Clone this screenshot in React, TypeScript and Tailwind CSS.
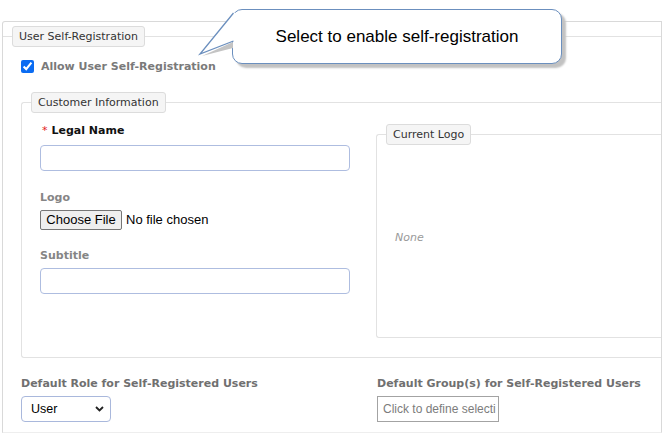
import React from "react";

function Legend({ children }: { children: React.ReactNode }) {
  return (
    <div className="-mt-[11px] ml-[9px] flex w-fit h-[21px] items-center px-[6px] border border-[#dcdcdc] bg-[#f5f5f5] rounded-[3px] text-[#333] whitespace-nowrap">
      {children}
    </div>
  );
}

export default function App() {
  return (
    <div className="relative w-[662px] h-[441px] overflow-hidden bg-white text-[11px] leading-[14px] font-['DejaVu_Sans',Verdana,sans-serif]">
      <div className="ml-[2px] mt-[21px] w-[660px] h-[412px] border border-[#d9d9d9] border-b-[#eeeeee] rounded-tl-[3px] overflow-hidden">
        <div className="mt-[14px] border-t border-[#e2e2e2]">
          <Legend>User Self-Registration</Legend>

          <div className="flex items-center mt-[12px] ml-[18px] h-[14px]">
            <input type="checkbox" defaultChecked className="w-[13px] h-[13px] accent-[#0b6cf2]" />
            <span className="ml-[7px] pt-[2px] font-bold text-[#7a7a7a]">Allow User Self-Registration</span>
          </div>

          <div className="mt-[29px] ml-[18px] border-l border-t border-b border-[#e2e2e2] rounded-l-[3px]">
            <Legend>Customer Information</Legend>
            <div className="flex items-start">
              <div className="ml-[18px] w-[310px] pt-[11px] flex flex-col">
                <div className="h-[14px] flex items-center whitespace-nowrap">
                  <span className="text-[#e32020] ml-[2px] mr-[4px]">*</span>
                  <span className="font-bold text-[#111]">Legal Name</span>
                </div>
                <div className="mt-[7px] h-[26px] w-[310px] border border-[#aebde0] rounded-[4px] bg-white" />
                <div className="mt-[20px] h-[14px] font-bold text-[#858585]">Logo</div>
                <div className="mt-[5px] h-[20px] flex items-center font-['Liberation_Sans',Arial,sans-serif] text-[13px] text-black">
                  <div className="h-[20px] w-[82px] flex items-center justify-center border border-[#767676] bg-[#efefef] rounded-[2px]">
                    Choose File
                  </div>
                  <span className="ml-[4px]">No file chosen</span>
                </div>
                <div className="mt-[19px] h-[14px] font-bold text-[#858585]">Subtitle</div>
                <div className="mt-[5px] h-[26px] w-[310px] border border-[#aebde0] rounded-[4px] bg-white" />
              </div>

              <div className="ml-[26px] flex-1 mt-[21px] mb-[19px]">
                <div className="h-[204px] border-l border-t border-b border-[#e2e2e2] rounded-l-[3px]">
                  <Legend>Current Logo</Legend>
                  <div className="mt-[86px] ml-[18px] italic text-[#9a9a9a]">None</div>
                </div>
              </div>
            </div>
          </div>

          <div className="flex mt-[19px] ml-[18px]">
            <div className="w-[356px] flex flex-col">
              <div className="h-[14px] font-bold text-[#707070] whitespace-nowrap">
                Default Role for Self-Registered Users
              </div>
              <div className="mt-[5px] h-[26px] w-[90px] flex items-center justify-between pl-[9px] pr-[6px] border border-[#a9b8dc] rounded-[4px] font-['Liberation_Sans',Arial,sans-serif] text-[12.5px] text-black">
                <span>User</span>
                <svg width="9" height="6" viewBox="0 0 9 6">
                  <path d="M1 1 L4.5 4.5 L8 1" fill="none" stroke="#222" strokeWidth="1.8" />
                </svg>
              </div>
            </div>
            <div className="flex flex-col">
              <div className="h-[14px] font-bold text-[#707070] whitespace-nowrap">
                Default Group(s) for Self-Registered Users
              </div>
              <div className="mt-[5px] h-[26px] w-[122px] flex items-center pl-[5px] border border-[#a3a3a3] overflow-hidden whitespace-nowrap font-['Liberation_Sans',Arial,sans-serif] text-[12px] text-[#7c7c7c]">
                Click to define selecti
              </div>
            </div>
          </div>
        </div>
      </div>

      {/* Callout tooltip */}
      <div className="absolute left-[232px] top-[9px] w-[330px] h-[55px] flex items-center justify-center bg-white border-[1.5px] border-[#6b8fbe] rounded-[10px] shadow-[4px_4px_2px_#c2c2c2] font-['Liberation_Sans',Arial,sans-serif] text-[17px] leading-[20px] text-black">
        Select to enable self-registration
      </div>
      <svg className="absolute left-[196px] top-[8px]" width="44" height="54" viewBox="0 0 44 54">
        <polygon points="6,48 37,34 37,40" fill="#c4c4c4" />
        <polygon points="4,46 37,5 41,5 41,33 37,33" fill="#ffffff" />
        <polyline points="37.5,5 4,46 37.5,33" fill="none" stroke="#6b8fbe" strokeWidth="1.3" strokeLinejoin="miter" />
      </svg>
    </div>
  );
}
